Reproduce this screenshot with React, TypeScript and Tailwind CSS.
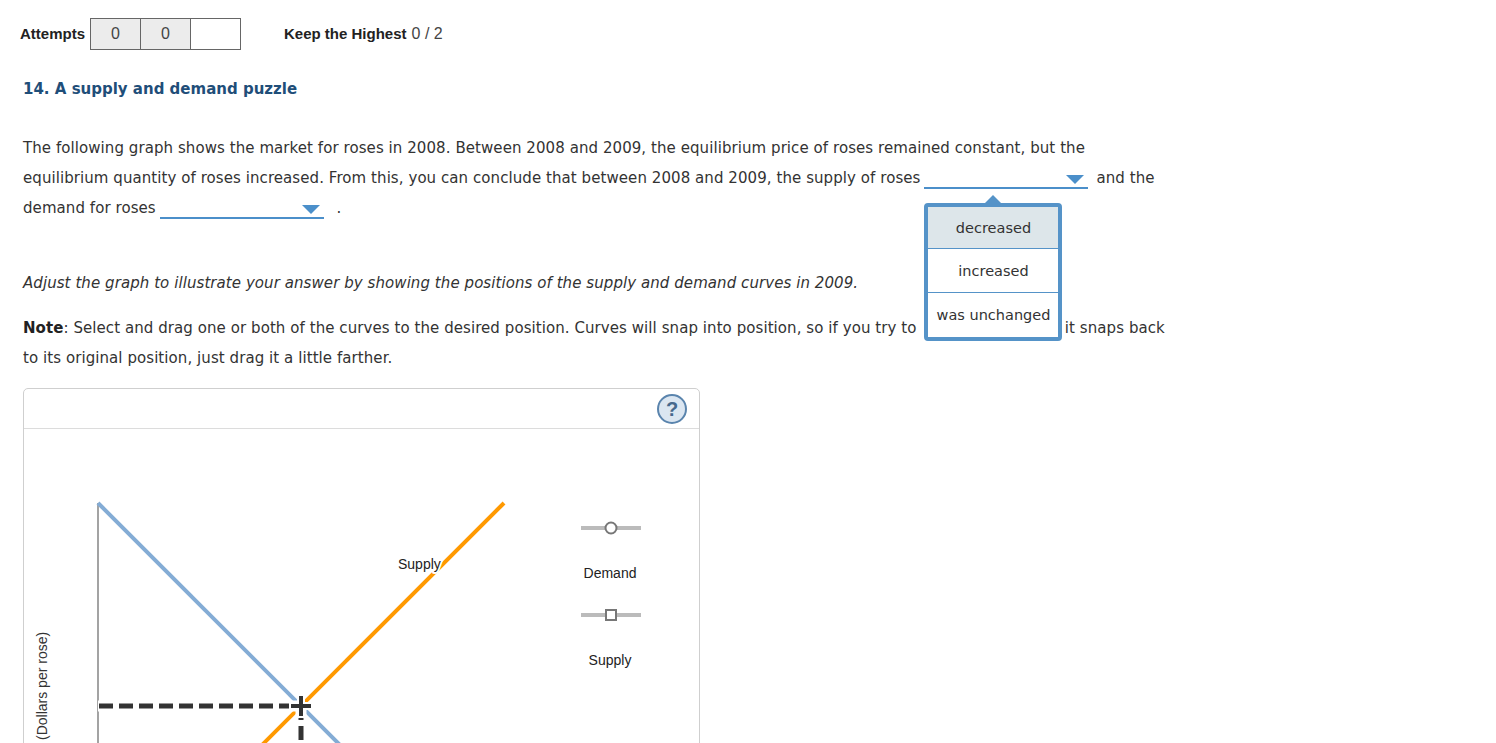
import * as React from 'react';

const verdana = { fontFamily: '"DejaVu Sans", Verdana, sans-serif' };

// inline select with blue underline and arrow
function Blank({ open = false }: { open?: boolean }) {
  return (
    <span className="relative inline-block w-[164px] h-[20px] align-[-6px] border-b-2 border-[#4b8fca] ml-[4px] mr-[8px] tracking-normal">
      <svg className="absolute right-[4px] top-[6px]" width="18" height="10" viewBox="0 0 18 10">
        <polygon points="0,0 18,0 9,9" fill="#4b8fca" />
      </svg>
      {open && (
        <span className="absolute left-0 top-[34px] z-10 block w-[138px] text-[14.5px]">
          <svg className="absolute left-[60px] -top-[8px]" width="18" height="9" viewBox="0 0 18 9">
            <polygon points="0,9 9,0 18,9" fill="#5593c8" />
          </svg>
          <span className="block bg-white border-4 border-[#5593c8] rounded-[4px] text-[#333] leading-[20px]">
            <span className="block h-[42px] flex items-center justify-center bg-[#dde6ea] border-b border-[#5593c8]">decreased</span>
            <span className="block h-[44px] flex items-center justify-center border-b border-[#5593c8]">increased</span>
            <span className="block h-[44px] flex items-center justify-center">was unchanged</span>
          </span>
        </span>
      )}
    </span>
  );
}

function Graph() {
  return (
    <div className="w-[677px] h-[400px] border border-[#cfcfcf] rounded-[5px] bg-white">
      <div className="h-[40px] border-b border-[#dcdcdc] flex items-center justify-end pr-[12px]">
        <div
          className="w-[30px] h-[30px] rounded-full border-2 border-[#5a84ad] bg-[#dbe6f1] flex items-center justify-center text-[#47698d] text-[20px] font-bold"
          style={{ fontFamily: '"Liberation Sans", Arial, sans-serif' }}
        >
          ?
        </div>
      </div>
      <svg width="675" height="360" viewBox="0 0 675 360" style={{ fontFamily: '"Liberation Sans", Arial, sans-serif' }}>
        {/* y axis */}
        <line x1="74" y1="74" x2="74" y2="360" stroke="#666" strokeWidth="1.2" />
        <text transform="translate(23,311) rotate(-90)" fontSize="14" fill="#333">(Dollars per rose)</text>

        {/* demand */}
        <line x1="74" y1="74" x2="370" y2="370" stroke="#84acd5" strokeWidth="4" />
        {/* supply */}
        <line x1="480" y1="74" x2="190" y2="364" stroke="#ff9900" strokeWidth="4" />

        {/* supply label with white halo */}
        <text x="374" y="140" fontSize="14" fill="#222" stroke="#fff" strokeWidth="4" paintOrder="stroke" strokeLinejoin="round">Supply</text>

        {/* equilibrium guides */}
        <line x1="74" y1="277" x2="277" y2="277" stroke="#fff" strokeWidth="11" />
        <line x1="277" y1="277" x2="277" y2="360" stroke="#fff" strokeWidth="11" />
        <line x1="75" y1="277" x2="277" y2="277" stroke="#333" strokeWidth="5" strokeDasharray="14 6" />
        <line x1="277" y1="277" x2="277" y2="360" stroke="#333" strokeWidth="5" strokeDasharray="14 6" />
        <line x1="265" y1="277" x2="289" y2="277" stroke="#fff" strokeWidth="8" />
        <line x1="277" y1="265" x2="277" y2="289" stroke="#fff" strokeWidth="8" />
        <line x1="267" y1="277" x2="287" y2="277" stroke="#333" strokeWidth="4" />
        <line x1="277" y1="267" x2="277" y2="287" stroke="#333" strokeWidth="4" />

        {/* legend */}
        <line x1="557" y1="99" x2="617" y2="99" stroke="#bbb" strokeWidth="4" />
        <circle cx="587" cy="99" r="5.5" fill="#fff" stroke="#777" strokeWidth="2" />
        <text x="586" y="149" fontSize="14" fill="#222" textAnchor="middle">Demand</text>
        <line x1="557" y1="186" x2="617" y2="186" stroke="#bbb" strokeWidth="4" />
        <rect x="582" y="181" width="10" height="10" fill="#fff" stroke="#777" strokeWidth="2" />
        <text x="586" y="236" fontSize="14" fill="#222" textAnchor="middle">Supply</text>
      </svg>
    </div>
  );
}

export default function App() {
  return (
    <div className="min-h-screen bg-white text-[#333] overflow-hidden">
      {/* attempts bar */}
      <div className="pl-[20px] pt-[18px] flex items-center h-[50px]" style={{ fontFamily: '"Liberation Sans", Arial, sans-serif' }}>
        <span className="text-[15px] font-bold text-[#222] mr-[5px]">Attempts</span>
        <div className="flex border border-[#666] h-[32px]">
          <div className="w-[50px] bg-[#ececec] border-r border-[#666] flex items-center justify-center text-[16px] text-[#444]">0</div>
          <div className="w-[50px] bg-[#ececec] border-r border-[#666] flex items-center justify-center text-[16px] text-[#444]">0</div>
          <div className="w-[49px] bg-white"></div>
        </div>
        <span className="ml-[43px] text-[15px] font-bold text-[#222]">Keep the Highest</span>
        <span className="ml-[5px] text-[16px] text-[#444]">0 / 2</span>
      </div>

      <div className="pl-[23px] text-[15px]" style={verdana}>
        <h2 className="mt-[29px] text-[15px] leading-[20px] font-bold text-[#1f4e79]">14. A supply and demand puzzle</h2>

        <p className="mt-[34px] leading-[30px] whitespace-nowrap tracking-[0.07px]">
          The following graph shows the market for roses in 2008. Between 2008 and 2009, the equilibrium price of roses remained constant, but the
          <br />
          equilibrium quantity of roses increased. From this, you can conclude that between 2008 and 2009, the supply of roses
          <Blank open />
          and the
          <br />
          demand for roses
          <Blank />
          &nbsp;.
        </p>

        <p className="mt-[45px] leading-[30px] italic tracking-[0.07px]">
          Adjust the graph to illustrate your answer by showing the positions of the supply and demand curves in 2009.
        </p>

        <p className="mt-[15px] leading-[30px] whitespace-nowrap tracking-[0.07px]">
          <b className="text-[#222]">Note</b>: Select and drag one or both of the curves to the desired position. Curves will snap into position, so if you try to{' '}
          <span className="ml-[6px] mr-[5px] tracking-[-0.5px]">move a curve and</span> it snaps back
          <br />
          to its original position, just drag it a little farther.
        </p>

        <div className="mt-[15px]">
          <Graph />
        </div>
      </div>
    </div>
  );
}
